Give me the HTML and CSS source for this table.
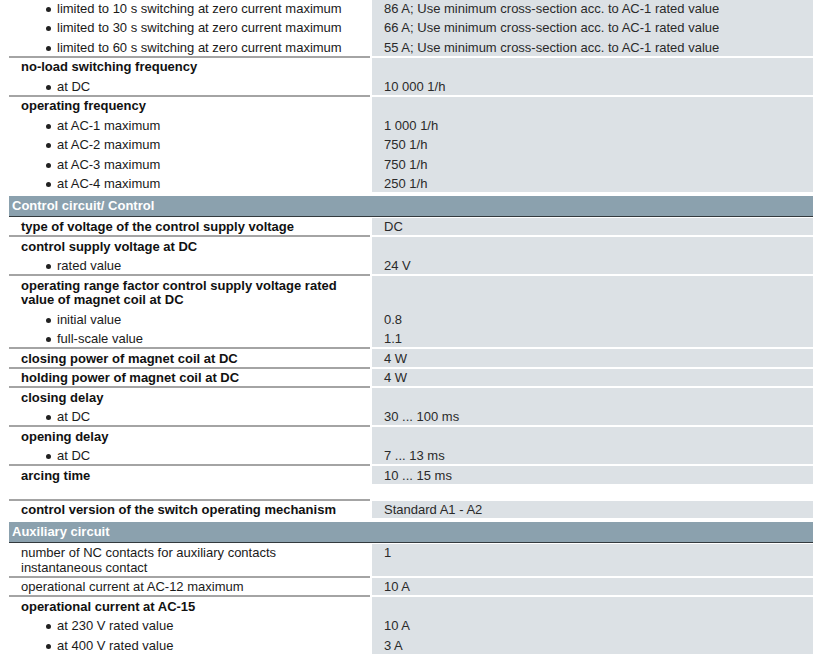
FILE: index.html
```html
<!DOCTYPE html>
<html lang="en">
<head>
<meta charset="utf-8">
<title>Technical data</title>
<link rel="stylesheet" href="styles.css">
</head>
<body>
<div class="sheet">
  <div class="group sep">
    <div class="l item"><span class="b"></span>limited to 10 s switching at zero current maximum</div><div class="r">86 A; Use minimum cross-section acc. to AC-1 rated value</div>
    <div class="l item"><span class="b"></span>limited to 30 s switching at zero current maximum</div><div class="r">66 A; Use minimum cross-section acc. to AC-1 rated value</div>
    <div class="l item"><span class="b"></span>limited to 60 s switching at zero current maximum</div><div class="r">55 A; Use minimum cross-section acc. to AC-1 rated value</div>
  </div>
  <div class="group sep">
    <div class="l strong">no-load switching frequency</div><div class="r"></div>
    <div class="l item"><span class="b"></span>at DC</div><div class="r">10 000 1/h</div>
  </div>
  <div class="group">
    <div class="l strong">operating frequency</div><div class="r"></div>
    <div class="l item"><span class="b"></span>at AC-1 maximum</div><div class="r">1 000 1/h</div>
    <div class="l item"><span class="b"></span>at AC-2 maximum</div><div class="r">750 1/h</div>
    <div class="l item"><span class="b"></span>at AC-3 maximum</div><div class="r">750 1/h</div>
    <div class="l item"><span class="b"></span>at AC-4 maximum</div><div class="r">250 1/h</div>
  </div>

  <div class="head">Control circuit/ Control</div>

  <div class="group sep">
    <div class="l strong">type of voltage of the control supply voltage</div><div class="r">DC</div>
  </div>
  <div class="group sep">
    <div class="l strong">control supply voltage at DC</div><div class="r"></div>
    <div class="l item"><span class="b"></span>rated value</div><div class="r">24 V</div>
  </div>
  <div class="group sep">
    <div class="l strong">operating range factor control supply voltage rated value of magnet coil at DC</div><div class="r"></div>
    <div class="l item"><span class="b"></span>initial value</div><div class="r">0.8</div>
    <div class="l item"><span class="b"></span>full-scale value</div><div class="r">1.1</div>
  </div>
  <div class="group sep">
    <div class="l strong">closing power of magnet coil at DC</div><div class="r">4 W</div>
  </div>
  <div class="group sep">
    <div class="l strong">holding power of magnet coil at DC</div><div class="r">4 W</div>
  </div>
  <div class="group sep">
    <div class="l strong">closing delay</div><div class="r"></div>
    <div class="l item"><span class="b"></span>at DC</div><div class="r">30 ... 100 ms</div>
  </div>
  <div class="group sep">
    <div class="l strong">opening delay</div><div class="r"></div>
    <div class="l item"><span class="b"></span>at DC</div><div class="r">7 ... 13 ms</div>
  </div>
  <div class="group">
    <div class="l strong">arcing time</div><div class="r">10 ... 15 ms</div>
  </div>
  <div class="spacer"></div>
  <div class="group">
    <div class="l strong">control version of the switch operating mechanism</div><div class="r">Standard A1 - A2</div>
  </div>

  <div class="head">Auxiliary circuit</div>

  <div class="group sep">
    <div class="l">number of NC contacts for auxiliary contacts instantaneous contact</div><div class="r">1</div>
  </div>
  <div class="group sep">
    <div class="l">operational current at AC-12 maximum</div><div class="r">10 A</div>
  </div>
  <div class="group">
    <div class="l strong">operational current at AC-15</div><div class="r"></div>
    <div class="l item"><span class="b"></span>at 230 V rated value</div><div class="r">10 A</div>
    <div class="l item"><span class="b"></span>at 400 V rated value</div><div class="r">3 A</div>
  </div>
</div>
</body>
</html>
```
FILE: styles.css
```css
html, body {
  margin: 0;
  padding: 0;
  background: #ffffff;
}

body {
  font-family: "Liberation Sans", Arial, sans-serif;
  font-size: 13px;
  color: #1c1c1c;
}

.sheet {
  width: 804px;
  margin: -1px 0 0 9px;
}

.group {
  display: grid;
  grid-template-columns: 361px 441px;
  column-gap: 2px;
  background-image: linear-gradient(#dce1e5, #dce1e5);
  background-repeat: no-repeat;
  background-position: right top;
  background-size: 441px calc(100% - 2px);
}

.group.sep {
  background-image: linear-gradient(#dce1e5, #dce1e5), linear-gradient(#a4a4a4, #a4a4a4);
  background-repeat: no-repeat, no-repeat;
  background-position: right top, left bottom;
  background-size: 441px calc(100% - 2px), 361px 2px;
}

.l, .r {
  line-height: 14.5px;
  padding: 2.5px 0;
}

.l {
  padding-left: 12px;
  padding-right: 10px;
  color: #1a1a1a;
}

.l.strong {
  font-weight: bold;
  color: #111111;
}

.l.item {
  padding-left: 37px;
}

.b {
  display: inline-block;
  width: 5px;
  height: 5px;
  margin-right: 6px;
  border-radius: 50%;
  background: #222222;
  vertical-align: 1px;
}

.r {
  padding-left: 12px;
  color: #2a2a2a;
}

.spacer {
  height: 15px;
  background-image: linear-gradient(#a4a4a4, #a4a4a4);
  background-repeat: no-repeat;
  background-position: left bottom;
  background-size: 361px 2px;
}

.head {
  margin: 2px 0 1px;
  height: 19.5px;
  line-height: 19.5px;
  padding-left: 3px;
  background: #8ba1ae;
  border-bottom: 1px solid #333a3e;
  color: #ffffff;
  font-weight: bold;
}
```
